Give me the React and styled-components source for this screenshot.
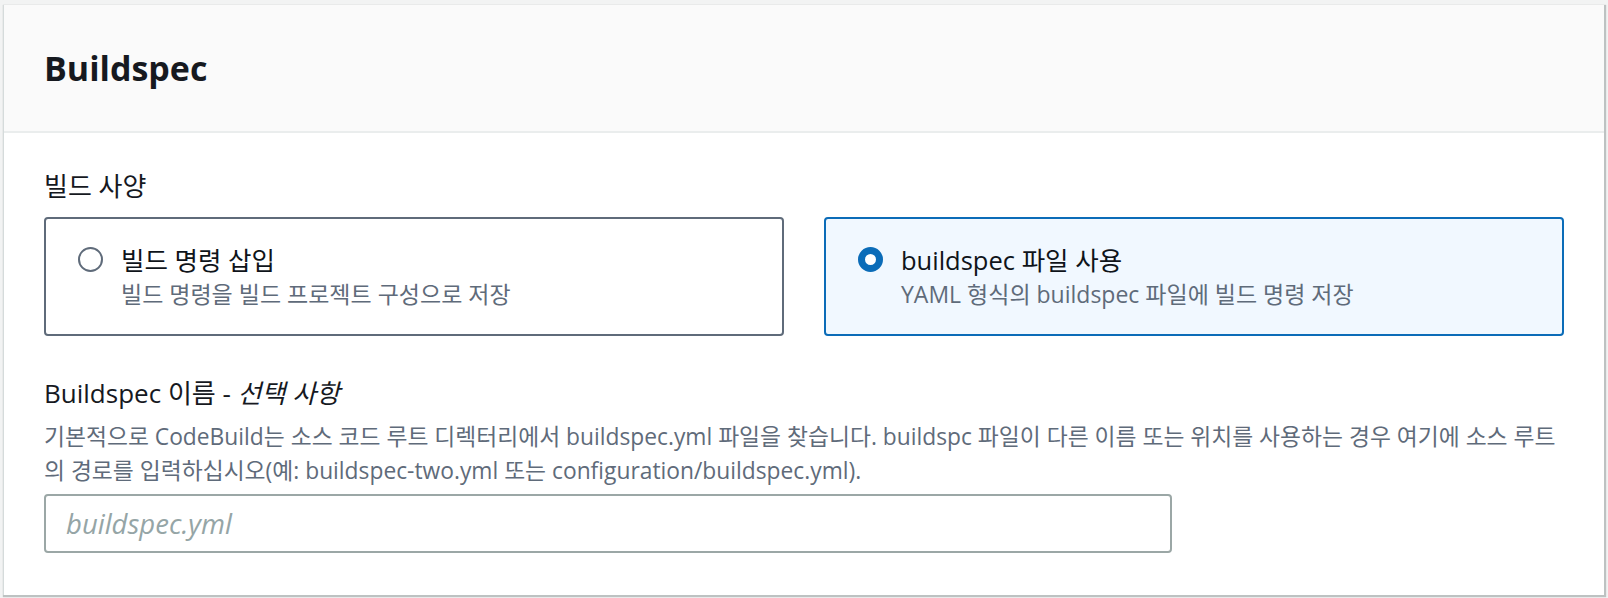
import React, { useState } from "react";
import styled, { createGlobalStyle } from "styled-components";

const GlobalStyle = createGlobalStyle`
  html, body {
    margin: 0;
    padding: 0;
    background: #f2f3f3;
  }
  body {
    font-family: "Open Sans", "Noto Sans CJK KR", sans-serif;
    color: #16191f;
  }
  * {
    box-sizing: border-box;
  }
`;

const Page = styled.div`
  padding: 5px 4px 4px 3px;
`;

const Card = styled.section`
  background: #ffffff;
  border-left: 1px solid #d5dbdb;
  box-shadow: 1px 1px 1px 1px rgba(0, 22, 22, 0.22);
`;

const Header = styled.div`
  height: 128px;
  display: flex;
  align-items: center;
  padding: 0 40px;
  background: #fafafa;
  border-bottom: 2px solid #eaeded;
`;

const Heading = styled.h2`
  margin: 0;
  font-size: 34px;
  font-weight: 700;
  color: #16191f;
`;

const Body = styled.div`
  padding: 36px 40px 42px 40px;
  display: flex;
  flex-direction: column;
`;

const FieldLabel = styled.div`
  font-size: 26px;
  line-height: 34px;
  color: #16191f;
  em {
    font-style: italic;
  }
`;

const TileGrid = styled.div`
  display: grid;
  grid-template-columns: 1fr 1fr;
  gap: 40px;
  margin-top: 14px;
  margin-bottom: 40px;
`;

const Tile = styled.label`
  display: flex;
  align-items: flex-start;
  gap: 18px;
  height: 119px;
  padding: 24px 32px;
  border: 2px solid ${({ $checked }) => ($checked ? "#0b6cb8" : "#5f6b7a")};
  border-radius: 4px;
  background: ${({ $checked }) => ($checked ? "#f1f8ff" : "#ffffff")};
  cursor: pointer;
`;

const Radio = styled.span`
  flex: none;
  width: 25px;
  height: 25px;
  margin-top: 4px;
  border-radius: 50%;
  border: ${({ $checked }) =>
    $checked ? "7.5px solid #0b6cb8" : "2.5px solid #5f6b7a"};
  background: #ffffff;
`;

const TileText = styled.div`
  display: flex;
  flex-direction: column;
`;

const TileTitle = styled.div`
  font-size: 25.5px;
  line-height: 34px;
  font-weight: 400;
  color: #0f141a;
`;

const TileDesc = styled.div`
  font-size: 23px;
  line-height: 34px;
  color: #5f6b7a;
`;

const FieldDesc = styled.div`
  font-size: 22.8px;
  line-height: 34px;
  color: #5f6b7a;
  margin-top: 10px;
  margin-bottom: 6px;
`;

const Input = styled.input`
  width: 100%;
  max-width: 1128px;
  height: 59px;
  padding: 0 20px;
  border: 2px solid #9ba7a6;
  border-radius: 4px;
  font-family: "Open Sans", "Noto Sans CJK KR", sans-serif;
  font-size: 27.5px;
  color: #16191f;
  outline: none;
  &::placeholder {
    color: #95a5a6;
    font-style: italic;
  }
`;

const options = [
  {
    id: "inline",
    title: "빌드 명령 삽입",
    desc: "빌드 명령을 빌드 프로젝트 구성으로 저장",
  },
  {
    id: "file",
    title: "buildspec 파일 사용",
    desc: "YAML 형식의 buildspec 파일에 빌드 명령 저장",
  },
];

const App = () => {
  const [mode, setMode] = useState("file");
  const [name, setName] = useState("");

  return (
    <>
      <GlobalStyle />
      <Page>
        <Card>
          <Header>
            <Heading>Buildspec</Heading>
          </Header>
          <Body>
            <FieldLabel>빌드 사양</FieldLabel>
            <TileGrid>
              {options.map(o => (
                <Tile
                  key={o.id}
                  $checked={mode === o.id}
                  onClick={() => setMode(o.id)}
                >
                  <Radio $checked={mode === o.id} />
                  <TileText>
                    <TileTitle>{o.title}</TileTitle>
                    <TileDesc>{o.desc}</TileDesc>
                  </TileText>
                </Tile>
              ))}
            </TileGrid>
            <FieldLabel>
              Buildspec 이름 - <em>선택 사항</em>
            </FieldLabel>
            <FieldDesc>
              기본적으로 CodeBuild는 소스 코드 루트 디렉터리에서 buildspec.yml
              파일을 찾습니다. buildspc 파일이 다른 이름 또는 위치를 사용하는
              경우 여기에 소스 루트
              <br />
              의 경로를 입력하십시오(예: buildspec-two.yml 또는
              configuration/buildspec.yml).
            </FieldDesc>
            <Input
              placeholder="buildspec.yml"
              value={name}
              onChange={e => setName(e.target.value)}
            />
          </Body>
        </Card>
      </Page>
    </>
  );
};

export default App;
